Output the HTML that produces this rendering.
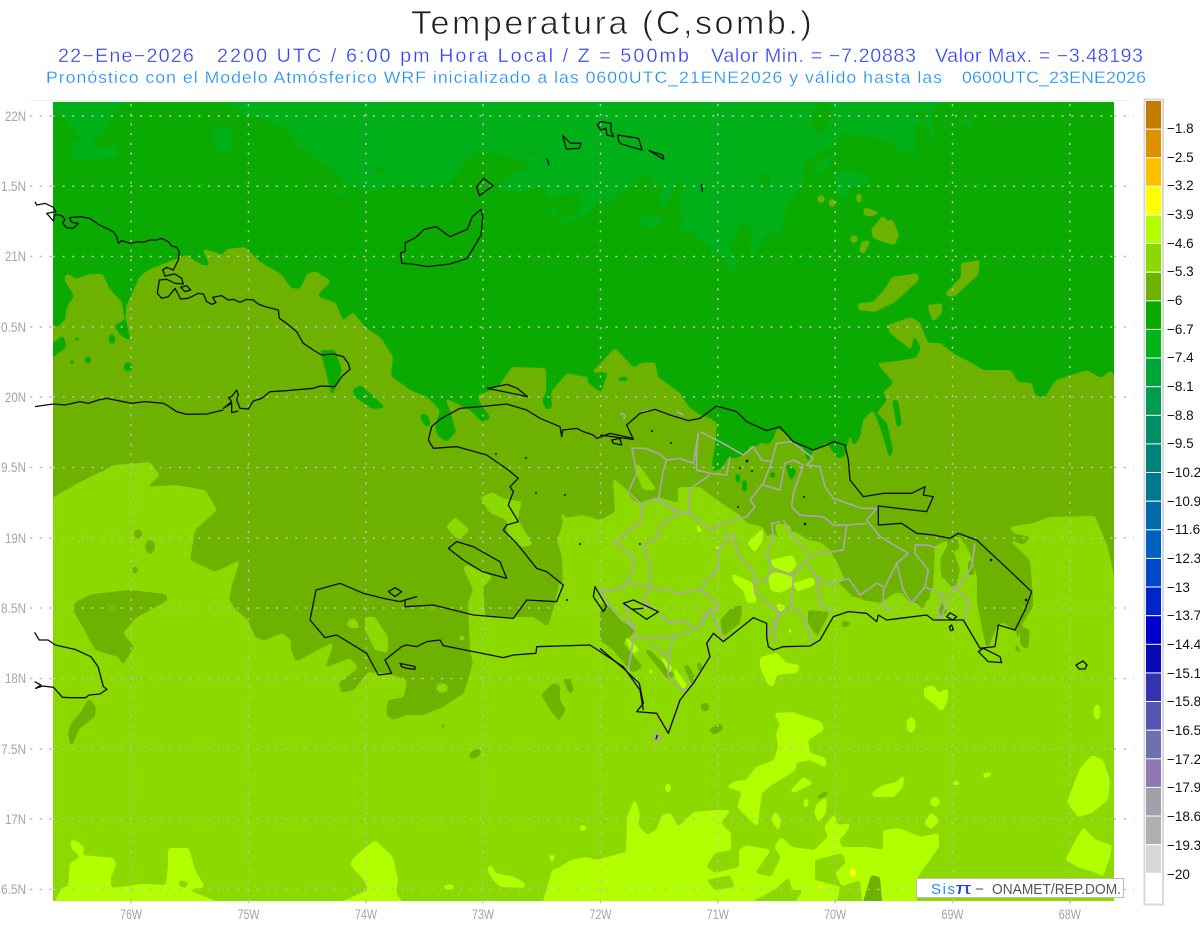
<!DOCTYPE html>
<html lang="es"><head><meta charset="utf-8"><title>Temperatura (C,somb.)</title>
<style>
html,body{margin:0;padding:0;background:#fff;width:1200px;height:927px;overflow:hidden}
svg{display:block}
text{font-family:"Liberation Sans",sans-serif}
.c *{fill:none;stroke:#0c0c0c;stroke-width:1.3;stroke-linejoin:round;vector-effect:non-scaling-stroke}
.b *{fill:none;stroke:#a8a8a8;stroke-width:1.7;stroke-linejoin:round;vector-effect:non-scaling-stroke}
.lab{fill:#a4a4a4;font-size:14px}
.bar{fill:#111;font-size:13.5px}
</style></head><body>
<svg width="1200" height="927" viewBox="0 0 1200 927" xmlns="http://www.w3.org/2000/svg">
<defs>
<filter id="s" filterUnits="userSpaceOnUse" x="0" y="60" width="1200" height="867" color-interpolation-filters="sRGB">
<feGaussianBlur stdDeviation="1.5"/>
<feComponentTransfer><feFuncA type="linear" slope="10" intercept="-4.5"/></feComponentTransfer>
</filter>
<clipPath id="m"><rect x="53" y="102" width="1061" height="799"/></clipPath>
</defs>
<rect width="1200" height="927" fill="#fff"/>

<!-- titles -->
<g transform="translate(411,34) scale(1.03,1)"><text x="0" y="0" font-size="33" fill="#222" stroke="#fff" stroke-width=".7" paint-order="fill stroke" textLength="389" lengthAdjust="spacing">Temperatura (C,somb.)</text></g>
<g font-size="19" fill="#3344ff" stroke="#fff" stroke-width=".3">
<g transform="translate(58,62) scale(1.04,1)"><text textLength="130.700" lengthAdjust="spacing">22−Ene−2026</text></g>
<g transform="translate(217,62) scale(1.04,1)"><text textLength="453.800" lengthAdjust="spacing">2200 UTC / 6:00 pm Hora Local / Z = 500mb</text></g>
<g transform="translate(711,62) scale(1.04,1)"><text textLength="197.100" lengthAdjust="spacing">Valor Min. = −7.20883</text></g>
<g transform="translate(935,62) scale(1.04,1)"><text textLength="200" lengthAdjust="spacing">Valor Max. = −3.48193</text></g>
</g>
<g font-size="17" fill="#1a90ff" stroke="#fff" stroke-width=".25">
<g transform="translate(46,83) scale(1.04,1)"><text textLength="861.500" lengthAdjust="spacing">Pronóstico con el Modelo Atmósferico WRF inicializado a las 0600UTC_21ENE2026 y válido hasta las</text></g>
<g transform="translate(962,83) scale(1.04,1)"><text textLength="176.900" lengthAdjust="spacing">0600UTC_23ENE2026</text></g>
</g>

<line x1="30" y1="100.500" x2="1130" y2="100.500" stroke="#f0f0f0"/>

<g clip-path="url(#m)">
<rect x="53" y="102" width="1061" height="799" fill="#8cd900"/>

<!-- olive -->
<g fill="#6eb200" filter="url(#s)">
<path d="M40,90 L1130,90 1130,610 1114,575 1107,545 1095,516 1050,517 1033,523 1010,527 1013,533 1030,537 1033,535 1023,545 1007,538 1030,560 1033,597 1033,607 1023,623 1017,643 1022,655 1015,650 1017,633 1003,622 997,627 987,650 983,633 977,603 977,577 970,553 960,537 955,537 933,547 935,550 933,587 927,597 923,610 917,603 910,603 902,593 895,593 880,603 863,600 857,597 853,597 838,582 840,570 830,550 820,542 808,540 793,530 790,537 777,537 773,533 767,537 763,527 747,523 740,515 727,507 713,497 700,487 690,487 678,487 678,503 657,497 640,503 633,500 625,488 613,478 615,512 600,520 583,515 565,518 558,502 563,523 557,540 562,557 563,587 560,580 555,603 548,627 533,617 517,617 485,617 483,587 493,577 467,565 463,567 473,590 468,603 470,650 473,663 464,693 443,707 423,715 407,715 393,720 386,715 388,700 404,697 407,680 386,673 368,672 354,690 341,693 339,683 358,668 350,658 325,668 334,642 314,652 296,662 291,650 291,640 282,633 264,641 255,637 248,620 236,610 229,600 232,585 240,560 215,572 190,560 195,530 217,510 205,490 175,485 147,487 160,475 150,462 115,465 80,482 40,505 Z"/>
<path d="M75,602 92,594 130,590 166,594 168,600 136,618 123,633 134,647 123,665 118,657 95,650 86,633 73,610Z"/>
<path d="M89,698 96,707 95,717 80,728 71,748 68,733 71,723 80,713Z"/>
<ellipse cx="475" cy="754" rx="7" ry="4" transform="rotate(-35 475 754)"/>
<circle cx="443" cy="726" r="2.500"/>
<path d="M541,695 553,683 560,685 560,722 552,713Z"/>
<path d="M563,680 570,677 574,690 570,695Z M558,697 566,710 558,722Z"/>
<path d="M600,603 610,607 620,620 637,630 623,643 643,667 633,673 627,667 613,650 600,640Z"/>
<path d="M644,650 650,650 675,675 668,680Z M683,665 689,665 697,682 692,685Z M696,661 702,664 703,671 698,671Z"/>
<path d="M716,725 722,723 723,730 714,735 708,730Z"/>
<ellipse cx="705" cy="707" rx="4.500" ry="4.500"/>
<path d="M808,610 830,612 817,637 808,623Z M732,607 743,605 740,623 723,637 720,620Z"/>
<path d="M845,620 852,624 845,628 840,624Z M912,560 930,565 930,600 912,600Z"/>
<path d="M940,560 950,540 960,570 955,590 945,580Z M940,600 948,612 938,618Z"/>
</g>

<!-- light patches on olive -->
<g fill="#8cd900" filter="url(#s)">
<path d="M446,527 455,517 470,530 458,540Z"/>
<path d="M348,620 355,618 360,628 352,628Z M365,617 375,617 388,637 388,653 375,650 365,630Z"/>
<ellipse cx="503" cy="632" rx="7" ry="5"/><circle cx="462" cy="638" r="3"/>
<path d="M480,498 492,492 502,498 512,500 522,502 517,518 533,545 522,547 513,542 507,532 507,520 490,513Z"/>
<path d="M637,462 657,490 643,490 635,470Z"/>
<ellipse cx="442" cy="688" rx="6" ry="5"/>
<ellipse cx="352" cy="624" rx="5" ry="4"/>
<path d="M775,523 790,525 793,537 777,537Z"/>
<path d="M813,555 835,558 845,580 825,585 808,575Z"/>
<path d="M497,510 510,500 520,515 508,522Z"/>
</g>
<g fill="#6eb200" filter="url(#s)">
<ellipse cx="150" cy="547" rx="5" ry="7"/><ellipse cx="138" cy="534" rx="4" ry="5"/><ellipse cx="135" cy="570" rx="3" ry="4"/><ellipse cx="210" cy="566" rx="2.500" ry="3"/>
<path d="M945,535 955,530 960,548 950,555Z M940,565 948,555 950,575 942,580Z"/>
<path d="M968,560 972,560 975,575 968,575Z"/>
<path d="M1020,625 1030,630 1028,650 1020,645Z"/>
</g>

<!-- bright -->
<g fill="#b2ff00" filter="url(#s)">
<path d="M70,840 77,841 85,848 82,855 114,858 116,865 111,877 111,888 143,884 166,885 168,865 168,848 189,848 195,870 205,887 188,890 216,901 225,912 50,912 62,887 68,887 70,863 80,857 71,848Z"/>
<path d="M375,840 393,857 398,880 396,893 402,901 405,912 335,912 343,901 368,890 364,880 350,865 354,857Z"/>
<path d="M488,865 493,867 495,873 514,877 525,883 525,888 500,887 493,880 488,872Z"/>
<ellipse cx="449" cy="887" rx="6" ry="2.500"/><ellipse cx="552" cy="858" rx="2.500" ry="4"/>
<path d="M540,912 552,870 560,867 571,860 587,857 596,860 626,852 627,817 635,798 640,815 638,825 647,835 656,830 662,815 671,813 678,827 694,812 717,810 731,810 721,823 731,833 731,850 715,853 706,867 715,873 739,867 739,850 746,845 771,850 755,873 771,877 781,857 774,847 781,837 792,847 814,850 828,837 824,827 835,813 837,825 851,823 846,833 839,840 842,847 867,847 883,850 883,830 899,828 921,837 939,833 939,847 917,878 917,912Z"/>
<path d="M774,713 792,712 822,722 824,730 808,740 810,753 826,758 826,768 810,760 796,763 796,770 769,787 762,793 760,807 758,827 753,823 737,807 742,792 726,787 735,781 746,780 756,767 774,760 778,747 776,733 780,725Z"/>
<path d="M789,792 803,777 814,783 796,792Z"/>
<ellipse cx="806" cy="803" rx="2.500" ry="5"/>
<path d="M827,797 826,813 819,823 814,813 817,803Z"/>
<path d="M775,810 781,820 779,832 771,820Z"/>
<path d="M871,793 883,785 897,782 906,772 896,757 885,752 890,752 905,770 903,787 894,797 874,797Z"/>
<ellipse cx="911" cy="725" rx="4.500" ry="8"/>
<path d="M924,688 933,685 939,693 948,688 948,700 942,712 933,703 924,697Z"/>
<ellipse cx="956" cy="783" rx="3.500" ry="2.500"/><ellipse cx="987" cy="775" rx="5" ry="2.500" transform="rotate(-20 987 775)"/>
<ellipse cx="1097" cy="712" rx="3.500" ry="8"/>
<path d="M1067,803 1074,783 1081,767 1092,755 1103,760 1110,780 1108,800 1092,813 1078,817Z"/>
<path d="M1065,860 1074,843 1083,827 1096,840 1112,845 1110,857 1103,877 1096,873 1078,867Z"/>
<ellipse cx="935" cy="802" rx="5" ry="5"/>
<path d="M931,812 940,820 931,830 924,823Z"/>
<ellipse cx="668" cy="788" rx="3" ry="5"/><ellipse cx="583" cy="828" rx="4" ry="3"/>
<path d="M770,560 793,555 797,565 790,573 773,567Z"/>
<path d="M768,575 777,572 793,577 792,587 780,593 770,590Z"/>
<path d="M793,583 813,577 815,585 797,592Z"/>
<path d="M732,573 740,577 753,583 757,603 747,603 743,590 733,582Z"/>
<path d="M747,543 763,528 763,540 755,553Z"/>
<path d="M695,520 703,532 698,533Z M712,543 720,547 720,553Z M775,602 787,607 780,613Z M787,623 793,633 789,634Z"/>
<path d="M622,633 640,650 633,654Z M657,651 672,667 670,675Z M673,665 687,685 683,690 675,677Z M648,665 654,673 650,675Z"/>
<path d="M760,657 777,653 787,663 800,665 797,673 777,675 773,687 768,685 760,667Z"/>
</g>
<g fill="#8cd900" filter="url(#s)">
<path d="M815,860 842,853 846,863 835,873 842,887 815,880Z"/>
<path d="M753,912 753,901 774,890 789,877 792,890 803,890 789,912Z"/>
<path d="M706,880 730,875 735,887 715,890Z"/>
<path d="M178,880 189,882 186,888 180,887Z"/>
<path d="M840,887 860,880 863,912 835,912Z"/>
</g>
<g fill="#6eb200" filter="url(#s)">
<path d="M815,798 827,790 828,795 820,799Z M871,875 880,877 883,912 860,912Z"/>
</g>
<path fill="#ffff00" d="M853,868 857,873 853,878 849,873Z M817,887 820,885 823,887 820,889Z"/>

<!-- dark green -->
<g fill="#0aaa00" filter="url(#s)">
<path d="M40,90 L1130,90 1130,376 1114,376 1111,370 1101,378 1087,370 1056,380 1044,398 1035,395 1032,383 1018,382 1011,370 983,370 970,362 956,355 940,343 928,343 920,323 911,317 897,322 887,325 890,333 911,350 914,335 921,348 916,358 890,362 877,363 880,367 894,383 883,392 887,400 877,413 887,423 893,450 890,460 883,437 880,427 873,410 863,420 860,437 853,447 850,430 848,445 840,453 833,453 827,442 820,447 813,450 808,463 803,447 793,445 787,435 777,428 773,440 767,445 760,442 757,447 750,445 747,453 737,458 728,458 722,468 713,472 712,462 715,447 717,423 710,418 700,415 689,407 680,393 658,377 655,362 641,363 634,368 615,348 587,377 580,376 567,373 551,392 552,408 546,410 542,400 546,392 546,368 512,367 498,387 484,393 478,395 480,403 491,418 482,422 470,410 445,398 450,410 456,432 447,442 437,435 435,427 440,410 427,397 410,390 391,376 393,357 381,338 365,327 353,312 343,321 336,303 317,296 331,281 315,271 307,274 300,289 291,288 281,274 260,262 245,247 227,249 222,255 202,248 210,266 202,265 186,255 150,269 140,276 126,307 126,320 131,341 121,336 114,326 124,320 122,302 109,288 103,274 90,274 76,279 67,273 64,279 74,296 67,307 65,320 57,327 40,321 Z"/>
<path d="M63,335 67,347 53,357 40,357 40,343 53,343Z"/>
<ellipse cx="112" cy="339" rx="3.500" ry="5.500"/>
<ellipse cx="88" cy="360" rx="3" ry="4"/>
<ellipse cx="128" cy="367" rx="4.500" ry="5"/>
<circle cx="72" cy="362" r="2.500"/><circle cx="77" cy="339" r="2.500"/>
<path d="M320,350 335,350 342,370 332,397 322,357Z"/>
<path d="M352,390 360,385 370,393 386,408 372,409 355,397Z"/>
<path d="M420,413 428,415 431,425 426,427 421,420Z"/>
<path d="M590,373 608,372 601,393 587,382Z"/>
<path d="M618,377 628,377 628,381 618,381Z"/>
<path d="M892,400 898,400 902,425 897,428Z"/>
<path d="M785,463 797,470 791,482Z M770,472 775,472 775,478 770,478Z M735,473 740,474 740,483 736,483Z M742,480 747,480 747,492 742,491Z"/>
<circle cx="840" cy="452" r="6"/>
</g>

<!-- lighter green -->
<g fill="#00b018" filter="url(#s)">
<path d="M222,90 222,102 240,113 270,121 288,130 295,143 315,158 336,170 343,183 367,192 395,185 430,188 450,183 470,157 481,152 510,156 536,167 515,172 505,180 498,190 520,192 543,187 550,198 581,193 592,195 601,205 614,198 637,183 644,173 649,175 651,183 663,185 658,205 666,207 678,183 685,183 678,207 683,217 677,233 692,232 697,240 709,245 711,255 725,257 728,275 735,273 737,260 728,247 742,223 749,223 752,233 749,253 758,253 763,237 770,232 780,235 787,207 804,180 804,163 835,143 842,133 863,137 883,138 897,150 916,155 914,128 925,120 932,137 935,138 932,113 942,102 942,90 Z"/>
<path d="M40,90 124,90 124,103 110,120 102,133 91,140 102,150 117,143 117,157 95,160 74,160 71,143 81,140 74,132 64,117 53,113 40,113Z"/>
<path d="M212,130 231,128 231,150 224,155 212,143Z"/>
<ellipse cx="273" cy="111" rx="7" ry="2.500"/>
<circle cx="341" cy="193" r="4"/>
<path d="M580,195 592,195 597,205 587,213 580,217Z"/>
<ellipse cx="650" cy="221" rx="11" ry="6"/>
<path d="M832,173 850,170 873,178 860,187 848,190 845,200 848,202 836,190Z"/>
<path d="M808,177 828,157 840,150 825,170Z"/>
<ellipse cx="967" cy="122" rx="6" ry="4"/><ellipse cx="943" cy="120" rx="3" ry="5"/>
<ellipse cx="552" cy="212" rx="8" ry="3" transform="rotate(-20 552 212)"/>
<path d="M560,220 580,212 590,208 585,216 562,225Z"/>
</g>
<g fill="#0aaa00" filter="url(#s)">
<path d="M821,95 833,115 821,135 809,123Z"/>
<ellipse cx="765" cy="180" rx="5" ry="8"/>
<ellipse cx="380" cy="171" rx="6" ry="3.500" transform="rotate(-20 380 171)"/>
<path d="M913,112 925,110 927,118 915,118Z"/>
<ellipse cx="530" cy="154" rx="6" ry="2.500"/>
</g>

<!-- olive islands -->
<g fill="#6eb200" filter="url(#s)">
<circle cx="821" cy="199" r="4"/><ellipse cx="832" cy="203" rx="3.500" ry="4.500"/><ellipse cx="859" cy="198" rx="3" ry="5"/>
<path d="M863,208 868,208 880,213 873,216 864,216Z"/>
<path d="M871,230 883,215 888,222 892,218 899,235 895,245 883,242 873,238Z"/>
<circle cx="854" cy="239" r="4"/>
<path d="M862,241 871,240 864,254 859,252Z"/>
<path d="M892,277 918,273 919,280 895,302 875,312 858,310 858,303 873,302 884,290Z"/>
<path d="M927,305 942,303 942,313 933,322Z"/>
<path d="M961,263 980,260 978,275 954,297 944,295 961,277Z"/>
</g>

<!-- grid -->
<g stroke="#bcbcbc" stroke-width="1.500" stroke-dasharray="2.200 7.500" fill="none">
<path d="M43,116H1134 M43,186.300H1134 M43,256.500H1134 M43,327H1134 M43,397H1134 M43,467.500H1134 M43,538H1134 M43,608H1134 M43,678.500H1134 M43,749H1134 M43,819H1134 M43,889.500H1134"/>
<path d="M131,104V903 M248.500,104V903 M366,104V903 M483,104V903 M600.500,104V903 M717.800,104V903 M835.100,104V903 M952.500,104V903 M1069.800,104V903"/>
</g>
</g>
<g stroke="#bcbcbc" stroke-width="1.500" stroke-dasharray="2.200 7.500" fill="none">
<path d="M30,116H53 M30,186.300H53 M30,256.500H53 M30,327H53 M30,397H53 M30,467.500H53 M30,538H53 M30,608H53 M30,678.500H53 M30,749H53 M30,819H53 M30,889.500H53"/>
<path d="M1114,116H1134 M1114,186.300H1134 M1114,256.500H1134 M1114,327H1134 M1114,397H1134 M1114,467.500H1134 M1114,538H1134 M1114,608H1134 M1114,678.500H1134 M1114,749H1134 M1114,819H1134 M1114,889.500H1134"/>
<path d="M131,901V908 M248.500,901V908 M366,901V908 M483,901V908 M600.500,901V908 M717.800,901V908 M835.100,901V908 M952.500,901V908 M1069.800,901V908"/>
</g>

<!-- provincial borders -->
<g class="b" transform="translate(600,390) scale(.33333)">
<polyline points="95,170 110,250 85,305 125,345 125,390 45,460 100,500 100,540 70,590 30,605 0,595"/>
<polyline points="0,600 35,655 105,720 85,840"/>
<polyline points="125,65 165,58 210,75 265,92"/>
<polyline points="95,175 135,175 175,190 200,210 240,205 280,220 295,130 290,180 290,240 330,250 380,255 390,200"/>
<polyline points="200,210 190,240 180,300 175,330 235,365 270,370 265,300 330,255"/>
<polyline points="300,125 360,155 430,195 460,170 485,210 515,215 520,195 530,160 575,155 640,205 620,225 660,230 675,290 700,325 785,355 830,355 800,390 840,440 925,490 890,520 850,600 850,650 875,665"/>
<polyline points="515,215 490,280 450,330 465,350 440,380 370,400 330,420 270,370"/>
<polyline points="370,430 405,440 410,490 460,545 465,610 490,630 540,670 500,740"/>
<polyline points="490,285 540,300 555,220 580,210 610,225 580,310 575,350 600,375 670,380 700,405 740,405 730,480 650,490 620,510 580,555 515,540 500,570 465,575"/>
<polyline points="540,395 515,400 520,440 500,490 515,540"/>
<polyline points="550,390 580,440 625,490"/>
<polyline points="740,405 800,400"/>
<polyline points="620,520 650,560 660,640 700,670"/>
<polyline points="650,560 690,585 745,565 780,615 830,580 850,590"/>
<polyline points="580,555 575,650 530,680 525,760"/>
<polyline points="575,650 610,680 640,760"/>
<polyline points="890,520 910,600 935,640 975,590 985,540 945,490 945,465 985,465 1010,475"/>
<polyline points="975,590 1030,615 1015,660 1020,690 1060,590 1080,585 1115,530 1125,460"/>
<polyline points="1060,590 1105,630 1095,690"/>
<polyline points="125,345 170,325 235,370 180,410 170,440 130,470 150,520 150,590 80,578"/>
<polyline points="150,590 240,610 300,600 355,530 355,480 390,440"/>
<polyline points="300,600 355,640 340,680 375,755"/>
<polyline points="150,590 130,630 175,670 210,700 250,690 290,720 340,650 300,690"/>
<polyline points="280,720 220,740 100,745 85,840"/>
<polyline points="220,740 205,800 205,860 250,905"/>
<polyline points="210,800 150,760"/>
<polyline points="105,720 70,640 100,630 175,665"/>
<polyline points="330,760 320,760 340,730 370,755"/>
<polyline points="250,905 280,880 330,800 320,760"/>
<polyline points="170,970 205,1030 240,930"/>
<polygon points="160,1040 170,1028 185,1040 170,1058"/>
<polyline points="60,70 75,75 70,90"/>
<polyline points="230,65 250,75"/>
</g>

<!-- coasts -->
<g class="c" transform="translate(20,190) scale(.33333)">
<polyline points="45,35 50,45 75,40 100,52 108,65 80,70 100,93 105,73 125,77 135,88 128,100 140,113 160,115 175,100 155,97 148,83 180,80 210,85 235,103 280,125 290,140 295,160 305,152 330,160 355,155 370,157 390,150 410,150 425,145 445,155 455,168 470,172 478,185 475,210 460,240 440,232 428,240 435,258 465,252 485,265 490,282 465,280 440,268 418,270 412,310 425,325 445,320 465,295 482,327 505,325 535,310 550,312 560,335 575,343 588,338 578,322 605,317 625,330 640,328 660,337 680,328 700,330 715,342 735,350 775,360 778,385 800,400 830,425 850,460 880,480 905,495 940,492 970,500 985,520 990,538 965,560 945,590 900,588 880,595 800,602 750,605 725,625 700,633 685,657 660,655 650,630 655,615 650,600 635,620 625,622 635,635 610,655 635,640 635,668 655,663"/>
<polyline points="610,660 560,672 500,673 470,665 440,645 430,640 375,635 335,640 260,625 235,630 205,640 180,635 135,645 100,642 45,650"/>
<polygon points="482,292 500,287 512,300 495,305"/>
</g>
<g class="c" transform="translate(50,100) scale(.34483,.33333)">
<polygon points="1020,490 1017,458 1030,455 1030,428 1060,413 1085,388 1120,380 1160,410 1210,388 1225,350 1250,328 1255,350 1250,405 1210,475 1160,492 1095,500 1050,492"/>
<polygon points="1237,260 1258,235 1285,257 1245,287"/>
<polygon points="1487,107 1510,130 1540,130 1535,145 1497,147"/>
<polyline points="1441,175 1447,195"/>
<polygon points="1268,865 1325,853 1355,865 1385,890 1340,880"/>
</g>
<g class="c" transform="translate(580,100) scale(.34483,.33333)">
<polygon points="50,75 60,65 90,70 90,95 98,110 78,105 75,85 60,90"/>
<polygon points="110,105 170,115 180,150 120,132 112,125"/>
<polygon points="200,152 240,165 243,178"/>
<polyline points="352,252 355,275"/>
</g>
<g class="c" transform="translate(300,390) scale(.33333)">
<polyline points="385,150 395,110 420,88 480,55 560,48 620,42 680,60 720,85 780,110 785,140 788,120 830,115 850,125 880,135 890,145 930,130 1000,145"/>
<polyline points="1030,960 1020,900 970,830 870,765 710,770 708,790 640,795 610,803 430,767 420,750 380,755 350,770 320,765 305,770 255,810 275,850 235,855 200,790 110,735 75,743 30,690 48,600 120,580 190,610 250,625 300,635 350,620 315,630 315,650 400,645 520,675 640,685 680,630 770,635 790,585 740,545 710,535 650,460 610,420 620,405 655,395 625,345 640,305 630,290 655,265 625,240 560,195 470,170 400,175 385,150"/>
<polygon points="445,475 470,455 520,470 600,515 620,565 548,545 490,510"/>
<polygon points="300,820 345,830 345,838 320,835 305,830"/>
<polygon points="265,605 285,593 305,605 285,620"/>
<polygon points="885,590 920,650 910,665 880,620"/>
</g>
<g class="c" transform="translate(600,390) scale(.33333)">
<polyline points="0,135 100,148 80,105 120,70 165,58 210,75 265,92 300,85 350,48 410,65 440,95 500,122 540,110 580,155 640,180 680,165 700,155 735,165 745,210 750,270 790,320 850,310 935,310 975,290 970,315 1000,320 980,365 835,348 835,405 905,400 950,430 1000,435 1050,445 1075,430 1130,450 1200,515 1295,605 1275,660 1245,720 1195,705 1185,770 1140,775 1090,690 1000,690 980,675 900,685 860,690 835,675 830,695 800,670 745,665 700,680 660,750 630,768 550,770 520,780 505,770 500,740 500,700 460,683 420,715 370,755 340,730 320,760 330,800 280,880 240,930 205,1030 170,970 110,965 130,940 118,880 70,835 0,775"/>
<polygon points="70,640 100,630 175,665 140,688 85,650"/>
<polyline points="95,658 130,655"/>
<polygon points="1135,785 1150,775 1200,800 1205,818 1165,815"/>
<polygon points="1040,680 1050,668 1070,680 1058,690"/>
<polygon points="1048,710 1055,705 1060,720 1052,722"/>
<polyline points="172,1035 168,1048"/>
<polygon points="35,150 60,145 65,165 40,160"/>
</g>
<g class="c">
<polygon points="1076,665 1083,661 1087,665 1085,669 1079,669"/>
</g>
<g class="c" transform="translate(0,600) scale(.35651,.33333)">
<polyline points="97,97 110,120 135,120 155,135 210,148 255,170 275,200 290,260 300,268 280,282 250,285 240,293 200,293 175,292 150,262 120,258 100,265 115,255 97,245"/>
</g>
<!-- black specks -->
<g fill="#111">
<circle cx="652" cy="431" r="1"/><circle cx="671" cy="443" r="1"/><circle cx="747" cy="461" r="1.400"/><circle cx="740" cy="468" r="1"/><circle cx="752" cy="471" r="1"/><circle cx="738" cy="507" r="1"/><circle cx="804" cy="497" r="1"/><circle cx="805" cy="524" r="1.300"/><circle cx="991" cy="560" r="1.300"/><circle cx="1026" cy="600" r="1.300"/><circle cx="565" cy="495" r="1"/><circle cx="580" cy="544" r="1"/><circle cx="567" cy="600" r="1"/><circle cx="496" cy="454" r="1"/><circle cx="526" cy="458" r="1"/><circle cx="536" cy="493" r="1"/><circle cx="640" cy="544" r="1"/>
</g>

<!-- colour bar -->
<rect x="1144.500" y="99.500" width="18.500" height="805" fill="#fff" stroke="#d8d8d8" stroke-width="2"/>
<g>
<rect x="1146" y="101" width="15" height="27.600" fill="#c17c00"/>
<rect x="1146" y="129.600" width="15" height="27.600" fill="#dc9200"/>
<rect x="1146" y="158.200" width="15" height="27.600" fill="#ffc000"/>
<rect x="1146" y="186.800" width="15" height="27.600" fill="#ffff00"/>
<rect x="1146" y="215.400" width="15" height="27.600" fill="#b2ff00"/>
<rect x="1146" y="244" width="15" height="27.600" fill="#8cd900"/>
<rect x="1146" y="272.700" width="15" height="27.600" fill="#6eb200"/>
<rect x="1146" y="301.300" width="15" height="27.600" fill="#0aaa00"/>
<rect x="1146" y="329.900" width="15" height="27.600" fill="#00b418"/>
<rect x="1146" y="358.500" width="15" height="27.600" fill="#00a63a"/>
<rect x="1146" y="387.200" width="15" height="27.600" fill="#009a50"/>
<rect x="1146" y="415.800" width="15" height="27.600" fill="#008e66"/>
<rect x="1146" y="444.400" width="15" height="27.600" fill="#00827c"/>
<rect x="1146" y="473" width="15" height="27.600" fill="#007890"/>
<rect x="1146" y="501.700" width="15" height="27.600" fill="#006cac"/>
<rect x="1146" y="530.300" width="15" height="27.600" fill="#0060c0"/>
<rect x="1146" y="558.900" width="15" height="27.600" fill="#0048c8"/>
<rect x="1146" y="587.500" width="15" height="27.600" fill="#0024cc"/>
<rect x="1146" y="616.200" width="15" height="27.600" fill="#0000cc"/>
<rect x="1146" y="644.800" width="15" height="27.600" fill="#0808b4"/>
<rect x="1146" y="673.400" width="15" height="27.600" fill="#3333b0"/>
<rect x="1146" y="702" width="15" height="27.600" fill="#5555b0"/>
<rect x="1146" y="730.700" width="15" height="27.600" fill="#7070b0"/>
<rect x="1146" y="759.300" width="15" height="27.600" fill="#9078b0"/>
<rect x="1146" y="787.900" width="15" height="27.600" fill="#a0a0a8"/>
<rect x="1146" y="816.500" width="15" height="27.600" fill="#b0b0b0"/>
<rect x="1146" y="845.200" width="15" height="27.600" fill="#d8d8d8"/>
<rect x="1146" y="873.800" width="15" height="29" fill="#fff"/>
</g>
<g class="bar">
<text x="1167" y="133">−1.8</text><text x="1167" y="162">−2.5</text><text x="1167" y="190">−3.2</text><text x="1167" y="219">−3.9</text><text x="1167" y="248">−4.6</text><text x="1167" y="276">−5.3</text><text x="1167" y="305">−6</text><text x="1167" y="334">−6.7</text><text x="1167" y="362">−7.4</text><text x="1167" y="391">−8.1</text><text x="1167" y="420">−8.8</text><text x="1167" y="448">−9.5</text><text x="1167" y="477">−10.2</text><text x="1167" y="506">−10.9</text><text x="1167" y="534">−11.6</text><text x="1167" y="563">−12.3</text><text x="1167" y="592">−13</text><text x="1167" y="620">−13.7</text><text x="1167" y="649">−14.4</text><text x="1167" y="678">−15.1</text><text x="1167" y="706">−15.8</text><text x="1167" y="735">−16.5</text><text x="1167" y="764">−17.2</text><text x="1167" y="792">−17.9</text><text x="1167" y="821">−18.6</text><text x="1167" y="850">−19.3</text><text x="1167" y="879">−20</text>
</g>

<!-- axis labels -->
<g class="lab" text-anchor="end">
<text x="26" y="121" textLength="21" lengthAdjust="spacingAndGlyphs">22N</text>
<text x="26" y="191" textLength="25" lengthAdjust="spacingAndGlyphs">1.5N</text>
<text x="26" y="261" textLength="21" lengthAdjust="spacingAndGlyphs">21N</text>
<text x="26" y="332" textLength="25" lengthAdjust="spacingAndGlyphs">0.5N</text>
<text x="26" y="402" textLength="21" lengthAdjust="spacingAndGlyphs">20N</text>
<text x="26" y="472" textLength="25" lengthAdjust="spacingAndGlyphs">9.5N</text>
<text x="26" y="543" textLength="21" lengthAdjust="spacingAndGlyphs">19N</text>
<text x="26" y="613" textLength="25" lengthAdjust="spacingAndGlyphs">8.5N</text>
<text x="26" y="683" textLength="21" lengthAdjust="spacingAndGlyphs">18N</text>
<text x="26" y="754" textLength="25" lengthAdjust="spacingAndGlyphs">7.5N</text>
<text x="26" y="824" textLength="21" lengthAdjust="spacingAndGlyphs">17N</text>
<text x="26" y="894" textLength="25" lengthAdjust="spacingAndGlyphs">6.5N</text>
</g>
<g class="lab" text-anchor="middle">
<text x="131" y="919" textLength="22" lengthAdjust="spacingAndGlyphs">76W</text><text x="248.500" y="919" textLength="22" lengthAdjust="spacingAndGlyphs">75W</text><text x="366" y="919" textLength="22" lengthAdjust="spacingAndGlyphs">74W</text><text x="483" y="919" textLength="22" lengthAdjust="spacingAndGlyphs">73W</text><text x="600.500" y="919" textLength="22" lengthAdjust="spacingAndGlyphs">72W</text><text x="717.800" y="919" textLength="22" lengthAdjust="spacingAndGlyphs">71W</text><text x="835.100" y="919" textLength="22" lengthAdjust="spacingAndGlyphs">70W</text><text x="952.500" y="919" textLength="22" lengthAdjust="spacingAndGlyphs">69W</text><text x="1069.800" y="919" textLength="22" lengthAdjust="spacingAndGlyphs">68W</text>
</g>

<!-- logo box -->
<rect x="916.500" y="878.500" width="207" height="19" fill="#fff" stroke="#bbb"/>
<text x="931" y="894" font-size="15" fill="#1a90ff" textLength="24" lengthAdjust="spacing">Sis</text>
<text x="955" y="894" font-size="17" fill="#2244ee" textLength="17" lengthAdjust="spacingAndGlyphs">π</text>
<text x="975" y="894" font-size="15" fill="#555">−</text>
<text x="992" y="894" font-size="15" fill="#555" textLength="129" lengthAdjust="spacingAndGlyphs">ONAMET/REP.DOM.</text>
</svg>
</body></html>
